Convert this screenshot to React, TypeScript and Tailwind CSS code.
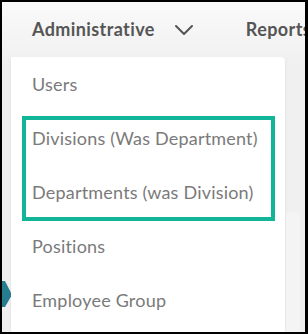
import { ChevronDown } from 'lucide-react'

const items = ['Users', 'Divisions (Was Department)', 'Departments (was Division)', 'Positions', 'Employee Group']

export default function App() {
  return (
    <div className="relative flex h-[334px] w-[308px] flex-col overflow-hidden border-2 border-r-[3px] border-black bg-[#efefef] font-['Lato',sans-serif]">
      {/* top nav */}
      <div className="flex h-[55px] shrink-0 items-center bg-gradient-to-b from-[#fafafa] to-[#f1f1f1] pl-[30px] text-[#555]">
        <span className="text-[18px] font-bold tracking-[0.4px]">Administrative</span>
        <ChevronDown size={32} strokeWidth={1.5} className="ml-[13px] shrink-0 text-[#555]" />
        <span className="ml-[46px] whitespace-nowrap text-[18px] font-bold tracking-[0.4px]">Reports</span>
      </div>

      <div className="flex flex-1">
        {/* left gutter */}
        <div className="relative w-[9px] shrink-0 bg-[#f0f0f0]">
          <div className="absolute left-[-6px] top-[224px] h-[26px] w-[15px] bg-[#267d8f] [clip-path:polygon(0_0,60%_0,100%_45%,100%_60%,60%_100%,0_100%)]" />
        </div>

        {/* dropdown */}
        <div className="relative w-[274px] shrink-0 rounded-tr-[4px] bg-white shadow-[0_1px_3px_rgba(0,0,0,0.08)]">
          {items.map((item) => (
            <div key={item} className="flex h-[54px] items-center pl-[21px] text-[18px] tracking-[0.2px] text-[#7a7a7a]">
              {item}
            </div>
          ))}
          <div className="pointer-events-none absolute left-[11px] top-[59px] h-[105px] w-[253px] border-[4px] border-[#12b597]" />
        </div>

        {/* right side */}
        <div className="flex flex-1 flex-col bg-[#f0f0f0] pl-[1px] pr-[5px]">
          <div className="mt-[155px] flex-1 rounded-t-[4px] bg-[#f4f4f4]" />
        </div>
      </div>
    </div>
  )
}
